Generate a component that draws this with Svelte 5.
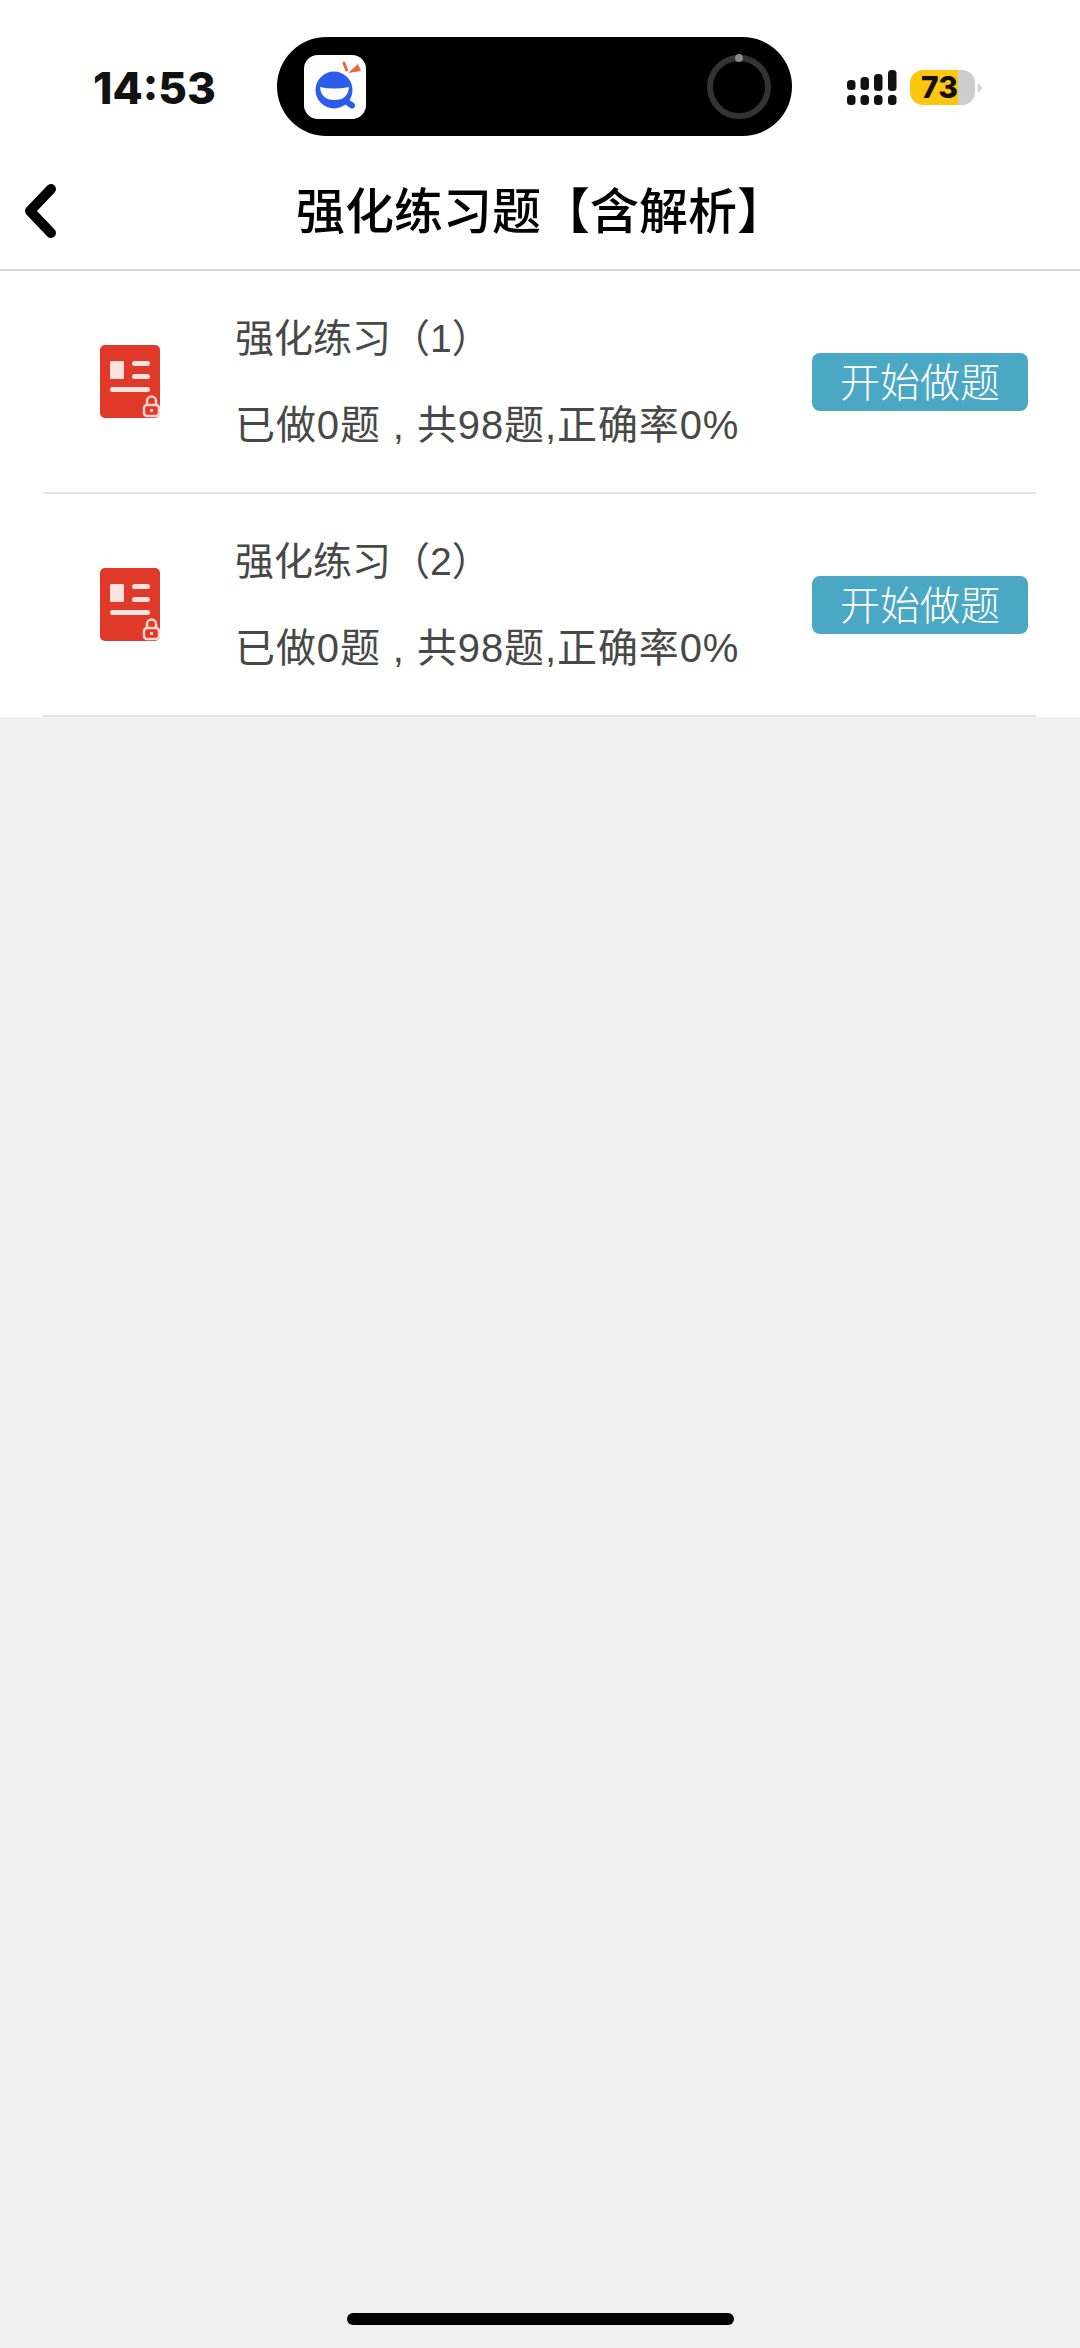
<script lang="ts">
  const rows = [
    { title: "强化练习（1）", stats: "已做0题 , 共98题,正确率0%" },
    { title: "强化练习（2）", stats: "已做0题 , 共98题,正确率0%" },
  ];
</script>

<div class="page">
  <header class="top">
    <div class="status">
      <span class="time">14:53</span>
      <div class="island">
        <div class="app-icon">
          <svg viewBox="0 0 62 64" width="62" height="64">
            <path d="M40 8l2.500 7" stroke="#ee6a3c" stroke-width="3" stroke-linecap="round" />
            <path d="M44 18l10 -9 3 7z" fill="#ee6a3c" />
            <circle cx="30" cy="35" r="18.500" fill="#2a5de8" />
            <path d="M43 47l5 3.500" stroke="#2a5de8" stroke-width="6" stroke-linecap="round" />
            <path d="M16 32q14 3 29 0q-1 13 -14.500 13q-13.500 0 -14.500 -13z" fill="#fff" />
          </svg>
        </div>
        <svg class="ring" viewBox="0 0 66 66" width="66" height="66">
          <circle cx="33" cy="33" r="29" fill="none" stroke="#333" stroke-width="6" />
          <circle cx="33" cy="4" r="4" fill="#8a8a8a" />
        </svg>
      </div>
      <div class="indicators">
        <svg viewBox="0 0 50 35" width="50" height="35" fill="#111">
          <rect x="0" y="10" width="8.500" height="10" rx="3.500" />
          <rect x="0" y="25" width="8.500" height="10" rx="3.500" />
          <rect x="13.500" y="7" width="8.500" height="13" rx="3.500" />
          <rect x="13.500" y="25" width="8.500" height="10" rx="3.500" />
          <rect x="27" y="4" width="8.500" height="17" rx="3.500" />
          <rect x="27" y="25" width="8.500" height="10" rx="3.500" />
          <rect x="41" y="0" width="8.500" height="21" rx="3.500" />
          <rect x="41" y="25" width="8.500" height="10" rx="3.500" />
        </svg>
        <div class="battery"><span class="level">73</span></div>
        <span class="nub"></span>
      </div>
    </div>
    <nav class="nav">
      <button class="back" aria-label="返回">
        <svg viewBox="0 0 34 56" width="34" height="56">
          <path d="M28 6L7 28l21 22" fill="none" stroke="#000" stroke-width="10" stroke-linecap="round" stroke-linejoin="round" />
        </svg>
      </button>
      <h1>强化练习题【含解析】</h1>
    </nav>
  </header>

  <ul class="list">
    {#each rows as row}
      <li class="row">
        <svg class="doc" viewBox="0 0 60 74" width="60" height="74">
          <rect width="60" height="73" rx="5" fill="#e0392a" />
          <rect x="10" y="16" width="14" height="18" rx="1" fill="#fde3de" />
          <rect x="32" y="16" width="18" height="5" rx="2.500" fill="#fde3de" />
          <rect x="32" y="29" width="18" height="5" rx="2.500" fill="#fde3de" />
          <rect x="10" y="42" width="40" height="5" rx="2.500" fill="#fde3de" />
          <path d="M47 60v-4a4.500 4.500 0 0 1 9 0v4" fill="none" stroke="#fbd5cc" stroke-width="2.500" />
          <rect x="44" y="60" width="15" height="11" rx="3" fill="none" stroke="#fbd5cc" stroke-width="2.500" />
          <rect x="50" y="64" width="3" height="3" fill="#fbd5cc" />
        </svg>
        <div class="info">
          <div class="name">{row.title}</div>
          <div class="stats">{row.stats}</div>
        </div>
        <button class="start">开始做题</button>
      </li>
    {/each}
  </ul>

  <div class="home"></div>
</div>

<style>
  :global(body) {
    margin: 0;
    background: #f0f0f0;
  }
  .page {
    display: flex;
    flex-direction: column;
    height: 2348px;
    background: #f0f0f0;
    font-family: "Liberation Sans", "Noto Sans CJK SC", sans-serif;
  }
  .top {
    background: #fff;
    border-bottom: 2px solid #d6d6d6;
    height: 271px;
    box-sizing: border-box;
  }
  .status {
    height: 153px;
    padding: 37px 0 0 93px;
    box-sizing: border-box;
    display: flex;
    align-items: flex-start;
  }
  .time {
    width: 184px;
    margin-top: 29px;
    font-family: Inter, sans-serif;
    font-size: 44px;
    line-height: 44px;
    font-weight: 800;
    color: #111;
  }
  .island {
    width: 515px;
    height: 99px;
    border-radius: 50px;
    background: #000;
    display: flex;
    align-items: center;
    justify-content: space-between;
    padding: 0 20px 0 27px;
    box-sizing: border-box;
  }
  .app-icon {
    width: 62px;
    height: 64px;
    border-radius: 14px;
    background: #fff;
  }
  .app-icon svg,
  .ring {
    display: block;
  }
  .indicators {
    display: flex;
    align-items: center;
    margin: 33px 0 0 55px;
  }
  .battery {
    width: 65px;
    height: 35px;
    margin-left: 13px;
    border-radius: 13px;
    background: linear-gradient(to right, #fcc70e 48px, #cdcdcd 48px);
  }
  .level {
    display: block;
    padding-left: 11px;
    font-family: Inter, sans-serif;
    font-size: 30px;
    line-height: 35px;
    font-weight: 800;
    color: #111;
  }
  .nub {
    width: 0;
    height: 0;
    margin-left: 3px;
    border-left: 4px solid #cdcdcd;
    border-top: 5px solid transparent;
    border-bottom: 5px solid transparent;
  }
  .nav {
    display: flex;
    align-items: center;
    height: 115px;
  }
  .back {
    width: 34px;
    margin-left: 23px;
    padding: 0;
    border: 0;
    background: none;
    display: flex;
  }
  h1 {
    margin: 0 0 0 239px;
    padding-bottom: 5px;
    font-family: "Noto Sans CJK SC", sans-serif;
    font-size: 49px;
    line-height: 58px;
    font-weight: 500;
    color: #000;
    white-space: nowrap;
  }
  .list {
    list-style: none;
    margin: 0;
    padding: 0 44px 0 43px;
    background: #fff;
    height: 446px;
  }
  .row {
    display: flex;
    align-items: center;
    height: 223px;
    box-sizing: border-box;
    border-bottom: 2px solid #e2e2e2;
    padding: 0 8px 0 57px;
  }
  .doc {
    flex: none;
  }
  .info {
    flex: 1;
    margin-left: 75px;
    color: #484848;
  }
  .name {
    font-size: 39px;
    line-height: 50px;
    margin-bottom: 36px;
  }
  .stats {
    font-size: 40px;
    letter-spacing: 0.9px;
    line-height: 50px;
  }
  .start {
    flex: none;
    width: 216px;
    height: 58px;
    padding: 0 0 4px;
    border: 0;
    border-radius: 8px;
    background: #4aa8c4;
    color: #fff;
    font-family: "Noto Sans CJK SC", sans-serif;
    font-size: 40px;
    font-weight: 300;
    line-height: 54px;
  }
  .home {
    width: 387px;
    height: 12px;
    margin: auto 0 23px 347px;
    border-radius: 6px;
    background: #000;
  }
</style>
